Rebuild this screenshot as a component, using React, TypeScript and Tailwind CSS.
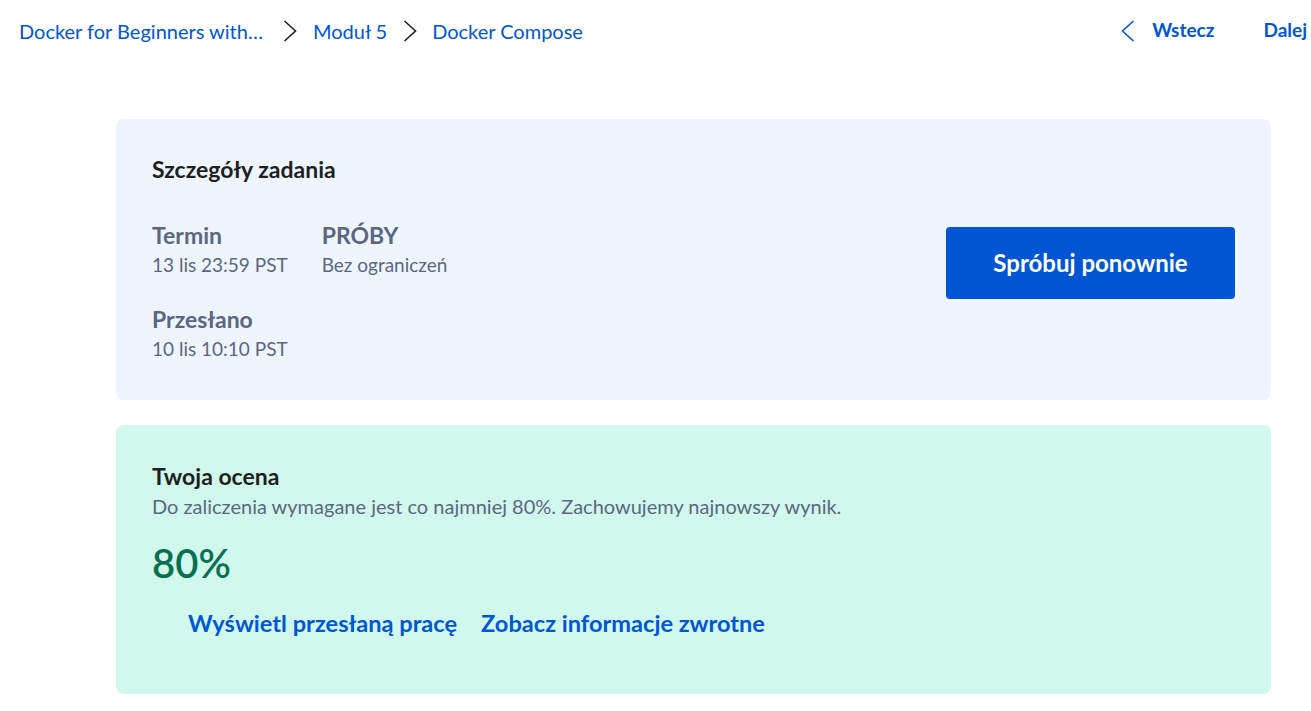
const font = { fontFamily: 'Lato, "Noto Sans", sans-serif' }

const Chevron = ({ dir, className }: { dir: 'left' | 'right'; className?: string }) => (
  <svg width="14" height="22" viewBox="0 0 14 22" fill="none" className={className}>
    <polyline
      points={dir === 'right' ? '1.5,1 12.5,11 1.5,21' : '12.5,1 1.5,11 12.5,21'}
      stroke="currentColor"
      strokeWidth="1.6"
      strokeLinejoin="miter"
    />
  </svg>
)

const Crumb = ({ children }: { children: React.ReactNode }) => (
  <a className="text-[20px] text-[#0056d2] leading-none">{children}</a>
)

const Detail = ({ label, value }: { label: string; value: string }) => (
  <div className="flex flex-col">
    <span className="text-[23px] font-bold text-[#5b6780] leading-[28px]">{label}</span>
    <span className="text-[19px] text-[#5b6780] leading-[32px]">{value}</span>
  </div>
)

const App = () => {
  return (
    <div className="w-[1311px] h-[711px] overflow-hidden bg-white" style={font}>
      {/* Top bar */}
      <div className="flex items-center justify-between h-[61px] pl-[19px] pr-[4px]">
        <div className="flex items-center">
          <Crumb>Docker for Beginners with…</Crumb>
          <Chevron dir="right" className="ml-[20px] mr-[16px] text-[#1f1f1f]" />
          <Crumb>Moduł 5</Crumb>
          <Chevron dir="right" className="ml-[16px] mr-[15px] text-[#1f1f1f]" />
          <Crumb>Docker Compose</Crumb>
        </div>
        <div className="flex items-center">
          <Chevron dir="left" className="text-[#0056d2] mr-[17px]" />
          <span className="text-[19px] font-bold text-[#0056d2]">Wstecz</span>
          <span className="text-[19px] font-bold text-[#0056d2] ml-[49px]">Dalej</span>
        </div>
      </div>

      <div className="pl-[116px] pr-[40px] pt-[58px] flex flex-col gap-[25px]">
        {/* Assignment details */}
        <div className="bg-[#eef5ff] rounded-[8px] h-[281px] px-[36px] pt-[35px] flex justify-between">
          <div className="flex flex-col">
            <h2 className="text-[23px] font-bold text-[#1f1f1f] leading-[30px]">Szczegóły zadania</h2>
            <div className="mt-[37px] flex gap-[34px]">
              <Detail label="Termin" value="13 lis 23:59 PST" />
              <Detail label="PRÓBY" value="Bez ograniczeń" />
            </div>
            <div className="mt-[24px]">
              <Detail label="Przesłano" value="10 lis 10:10 PST" />
            </div>
          </div>
          <button className="mt-[73px] w-[289px] h-[72px] bg-[#0056d2] rounded-[4px] text-white text-[24px] font-bold">
            Spróbuj ponownie
          </button>
        </div>

        {/* Grade */}
        <div className="bg-[#d0f8ec] rounded-[8px] h-[269px] px-[36px] pt-[36px]">
          <h2 className="text-[23px] font-bold text-[#1f1f1f] leading-[30px]">Twoja ocena</h2>
          <p className="text-[20px] text-[#5b6780] leading-[30px]">
            Do zaliczenia wymagane jest co najmniej 80%. Zachowujemy najnowszy wynik.
          </p>
          <div className="mt-[18px] text-[40px] font-semibold text-[#087051] leading-[48px]">80%</div>
          <div className="mt-[21px] ml-[36px] flex gap-[24px]">
            <a className="text-[23.6px] font-bold text-[#0056d2] leading-[30px]">Wyświetl przesłaną pracę</a>
            <a className="text-[23.6px] font-bold text-[#0056d2] leading-[30px]">Zobacz informacje zwrotne</a>
          </div>
        </div>
      </div>
    </div>
  )
}

export default App
